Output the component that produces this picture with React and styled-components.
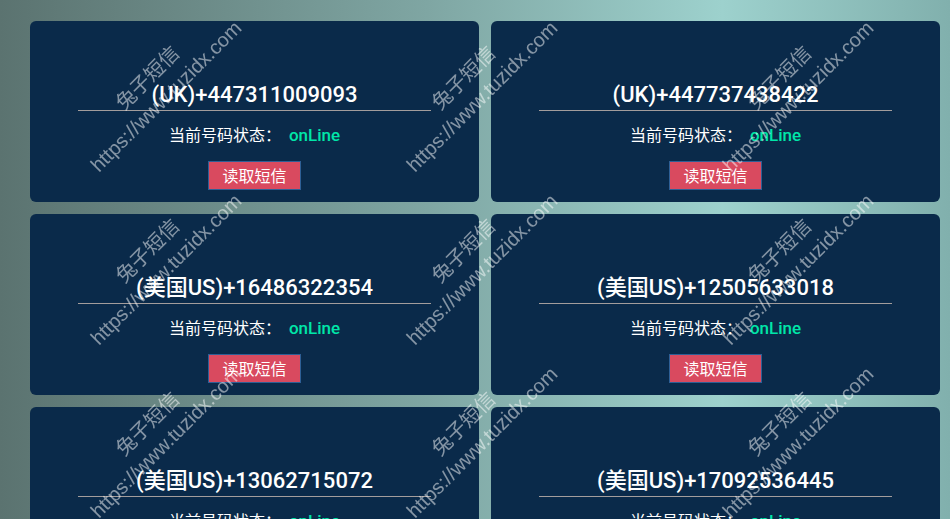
import styled, { createGlobalStyle } from "styled-components";

const numbers = [
  { id: 1, title: "(UK)+447311009093" },
  { id: 2, title: "(UK)+447737438422" },
  { id: 3, title: "(美国US)+16486322354" },
  { id: 4, title: "(美国US)+12505633018" },
  { id: 5, title: "(美国US)+13062715072" },
  { id: 6, title: "(美国US)+17092536445" },
];

const GlobalStyle = createGlobalStyle`
  html, body {
    margin: 0;
    padding: 0;
    height: 100%;
  }
  body {
    font-family: "Liberation Sans", "Noto Sans CJK SC", sans-serif;
    background: linear-gradient(90deg, #5b7370 0%, #7fa6a3 45%, #9dd1cd 76%, #81b0ad 100%);
    background-attachment: fixed;
    overflow: hidden;
  }
`;

const App = () => {
  return (
    <>
      <GlobalStyle />
      <Page>
        <CardGrid>
          {numbers.map((item) => (
            <Card key={item.id}>
              <Title>{item.title}</Title>
              <Status>
                当前号码状态：<Online>onLine</Online>
              </Status>
              <ReadButton>读取短信</ReadButton>
            </Card>
          ))}
        </CardGrid>
      </Page>
      <Watermarks>
        {Array.from({ length: 16 }).map((_, i) => (
          <MarkCell key={i}>
            <Mark>
              <div>兔子短信</div>
              <div>https://www.tuzidx.com</div>
            </Mark>
          </MarkCell>
        ))}
      </Watermarks>
    </>
  );
};

export default App;

const Page = styled.div`
  min-height: 100vh;
  padding: 21px 10px 0 30px;
  box-sizing: border-box;
`;

const CardGrid = styled.div`
  display: grid;
  grid-template-columns: 1fr 1fr;
  gap: 12px;
`;

const Card = styled.div`
  background: #0a2a4a;
  border-radius: 6px;
  height: 181px;
  box-sizing: border-box;
  padding-top: 60px;
  display: flex;
  flex-direction: column;
  align-items: center;
  color: #fff;
`;

const Title = styled.div`
  align-self: stretch;
  margin: 0 48px;
  font-family: Roboto, "Noto Sans CJK SC", sans-serif;
  font-size: 22px;
  line-height: 28px;
  font-weight: 500;
  text-align: center;
  padding-bottom: 1px;
  border-bottom: 1px solid #a39d9c;
`;

const Status = styled.div`
  margin-top: 12px;
  font-size: 16px;
  line-height: 24px;
`;

const Online = styled.span`
  font-family: Roboto, sans-serif;
  font-size: 17px;
  color: #00e6a8;
  font-weight: 500;
  margin-left: 8px;
`;

const ReadButton = styled.button`
  margin-top: 13px;
  height: 29px;
  padding: 0 13px 2px;
  line-height: 24px;
  background: #d94a5f;
  border: 1px solid #2e5f95;
  color: #fff;
  font-family: "Noto Sans CJK SC", sans-serif;
  font-size: 16px;
  cursor: pointer;
`;

const Watermarks = styled.div`
  position: fixed;
  top: 0;
  left: -1px;
  width: 1264px;
  display: grid;
  grid-template-columns: repeat(4, 316px);
  grid-auto-rows: 173px;
  pointer-events: none;
`;

const MarkCell = styled.div`
  display: flex;
  align-items: center;
  justify-content: center;
`;

const Mark = styled.div`
  transform: rotate(-45deg);
  text-align: center;
  font-family: "Liberation Sans", "Noto Sans CJK SC", sans-serif;
  font-size: 20px;
  line-height: 26px;
  color: rgba(255, 255, 255, 0.5);
  white-space: nowrap;
`;
